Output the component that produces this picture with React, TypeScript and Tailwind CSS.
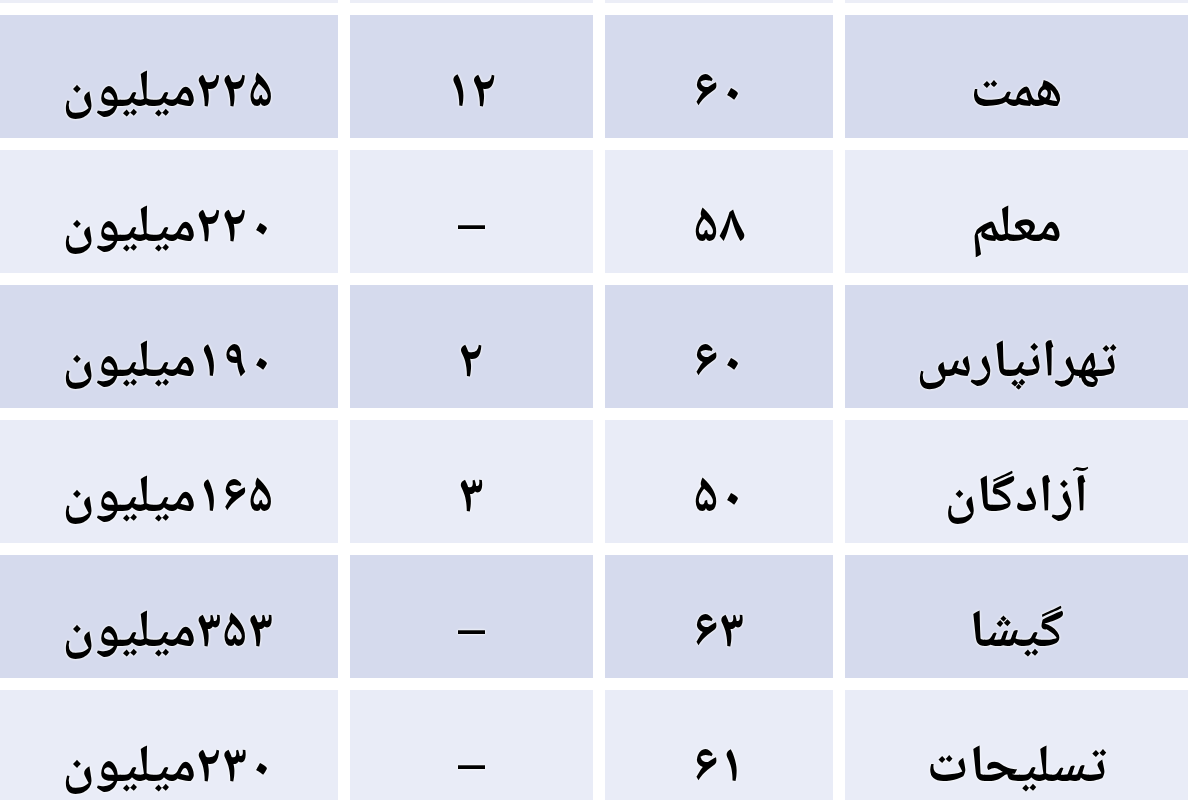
const rows = [
  { name: "همت", area: "۶۰", age: "۱۲", price: "۲۲۵میلیون" },
  { name: "معلم", area: "۵۸", age: "–", price: "۲۲۰میلیون" },
  { name: "تهرانپارس", area: "۶۰", age: "۲", price: "۱۹۰میلیون" },
  { name: "آزادگان", area: "۵۰", age: "۳", price: "۱۶۵میلیون" },
  { name: "گیشا", area: "۶۳", age: "–", price: "۳۵۳میلیون" },
  { name: "تسلیحات", area: "۶۱", age: "–", price: "۲۳۰میلیون" },
];

function Cell({ children, dark }: { children?: React.ReactNode; dark: boolean }) {
  return (
    <div
      className={`flex items-center justify-center pt-[36px] text-[53px] font-bold leading-none text-black [text-shadow:0_0_3px_#fff,0_0_2px_#fff] ${
        dark ? "bg-[#d5daed]" : "bg-[#e9ecf7]"
      }`}
    >
      {children}
    </div>
  );
}

export default function App() {
  return (
    <div
      dir="rtl"
      className="h-[800px] w-[1200px] overflow-hidden bg-white pr-[12px] font-['Noto_Naskh_Arabic','DejaVu_Serif','DejaVu_Sans',serif]"
    >
      <div className="grid grid-cols-[343px_228px_243px_340px] gap-x-[12px] gap-y-[12px] auto-rows-[123px] [grid-template-rows:3px]">
        <div className="bg-[#eceef7]" />
        <div className="bg-[#eceef7]" />
        <div className="bg-[#eceef7]" />
        <div className="bg-[#eceef7]" />
        {rows.map((r, i) => {
          const dark = i % 2 === 0;
          return (
            <>
              <Cell key={`n${i}`} dark={dark}>{r.name}</Cell>
              <Cell key={`a${i}`} dark={dark}>{r.area}</Cell>
              <Cell key={`g${i}`} dark={dark}>{r.age}</Cell>
              <Cell key={`p${i}`} dark={dark}>{r.price}</Cell>
            </>
          );
        })}
      </div>
    </div>
  );
}
